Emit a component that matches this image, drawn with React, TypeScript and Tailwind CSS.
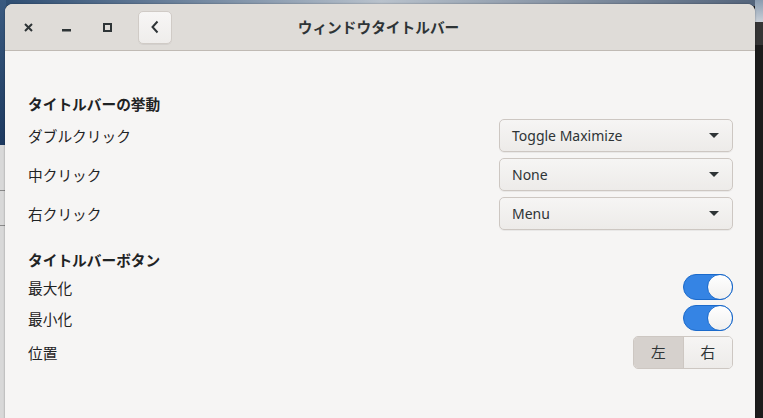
import React from "react";

const jp = { fontFamily: "'Noto Sans CJK JP', 'Noto Sans', sans-serif" };

function Combo({ value }: { value: string }) {
  return (
    <div className="w-[234px] h-[33px] flex items-center justify-between pl-[12px] pr-[13px] rounded-[5px] border border-[#cdc7c2] bg-gradient-to-b from-[#f6f5f4] to-[#edebe9] shadow-[0_1px_0_rgba(0,0,0,0.05)] text-[14px] text-[#2e3436]" style={{ fontFamily: "'Noto Sans', sans-serif" }}>
      <span>{value}</span>
      <svg width="10" height="6" viewBox="0 0 10 6"><path d="M0 0 L10 0 L5 5 Z" fill="#2e3436" /></svg>
    </div>
  );
}

function Switch() {
  return (
    <div className="relative w-[50px] h-[26px] rounded-full bg-[#3584e4] border border-[#1b6acb]">
      <div className="absolute right-[-1px] top-[-1px] w-[26px] h-[26px] rounded-full bg-gradient-to-b from-[#ffffff] to-[#f1f0ef] border border-[#1b6acb]" />
    </div>
  );
}

function Row({ label, children, h }: { label: string; children: React.ReactNode; h: string }) {
  return (
    <div className={`flex items-center justify-between ${h}`}>
      <span className="text-[14.7px] text-[#1f2324] pt-[2px]" style={jp}>{label}</span>
      {children}
    </div>
  );
}

export default function App() {
  return (
    <div className="relative w-[763px] h-[418px] overflow-hidden bg-[#1c1c1c]">
      {/* desktop background */}
      <div className="absolute left-0 top-0 w-[763px] h-[6px] bg-gradient-to-r from-[#2d4d72] via-[#b9c2cc] to-[#52637a]" />
      <div className="absolute left-0 top-0 w-[6px] h-[145px] bg-gradient-to-b from-[#3a5a80] to-[#1d3a60]" />
      <div className="absolute left-0 top-[145px] w-[6px] h-[273px] bg-[#d8d8d8]" />
      <div className="absolute left-0 top-[190px] w-[6px] h-[1px] bg-[#8a8a8a]" />
      <div className="absolute left-0 top-[225px] w-[6px] h-[1px] bg-[#8a8a8a]" />
      <div className="absolute right-0 top-0 w-[8px] h-[22px] bg-gradient-to-b from-[#8a9cb0] to-[#c9d0d8]" />
      <div className="absolute right-0 top-[22px] w-[8px] h-[23px] bg-[#353535]" />

      {/* window */}
      <div className="absolute left-[5px] top-[4px] w-[750px] h-[420px] flex flex-col rounded-t-[8px] overflow-hidden bg-[#f6f5f4] shadow-[0_0_2px_rgba(0,0,0,0.4)]">
        {/* header */}
        <div className="relative h-[47px] shrink-0 flex items-center bg-[#dfdcd8] border-b border-[#c0bab4]">
          <div className="flex items-center">
            <div className="w-[8px] ml-[19px]">
              <svg width="9" height="9" viewBox="0 0 9 9"><path d="M1 1 L8 8 M8 1 L1 8" stroke="#2e3436" strokeWidth="2" /></svg>
            </div>
            <div className="ml-[30px] mt-[6px]">
              <svg width="10" height="3" viewBox="0 0 10 3"><rect x="0" y="0" width="9" height="2.5" fill="#2e3436" /></svg>
            </div>
            <div className="ml-[31px]">
              <svg width="9" height="9" viewBox="0 0 9 9"><rect x="1" y="1" width="7" height="7" fill="none" stroke="#2e3436" strokeWidth="2" /></svg>
            </div>
            <div className="ml-[26px] w-[34px] h-[33px] flex items-center justify-center rounded-[5px] border border-[#d0cbc6] bg-gradient-to-b from-[#f7f6f5] to-[#efedeb] shadow-[0_1px_0_rgba(0,0,0,0.05)]">
              <svg width="10" height="14" viewBox="0 0 10 14"><path d="M7.5 1.5 L2.5 7 L7.5 12.5" fill="none" stroke="#2e3436" strokeWidth="2" /></svg>
            </div>
          </div>
          <div className="absolute left-0 right-0 top-0 h-[46px] flex items-center justify-center pointer-events-none">
            <span className="text-[14.7px] font-bold text-[#2e3436] mr-[3px]" style={jp}>ウィンドウタイトルバー</span>
          </div>
        </div>

        {/* content */}
        <div className="flex flex-col pl-[23px] pr-[22px] pt-[42px]">
          <div className="h-[20px] flex items-center mb-[6px] pt-[2px]">
            <span className="text-[14.7px] font-bold text-[#1f2324]" style={jp}>タイトルバーの挙動</span>
          </div>
          <div className="flex flex-col gap-[6px]">
            <Row label="ダブルクリック" h="h-[33px]"><Combo value="Toggle Maximize" /></Row>
            <Row label="中クリック" h="h-[33px]"><Combo value="None" /></Row>
            <Row label="右クリック" h="h-[33px]"><Combo value="Menu" /></Row>
          </div>
          <div className="h-[20px] flex items-center mt-[19px] mb-[5px] pt-[2px]">
            <span className="text-[14.7px] font-bold text-[#1f2324]" style={jp}>タイトルバーボタン</span>
          </div>
          <div className="flex flex-col gap-[5px]">
            <Row label="最大化" h="h-[26px]"><Switch /></Row>
            <Row label="最小化" h="h-[26px]"><Switch /></Row>
            <Row label="位置" h="h-[33px]">
              <div className="flex h-[33px] w-[100px] rounded-[5px] border border-[#cdc7c2] overflow-hidden text-[14.7px] text-[#2e3436]" style={jp}>
                <div className="flex-1 flex items-center justify-center bg-[#d6d1cd] border-r border-[#cdc7c2]">左</div>
                <div className="flex-1 flex items-center justify-center bg-gradient-to-b from-[#f6f5f4] to-[#edebe9]">右</div>
              </div>
            </Row>
          </div>
        </div>
      </div>
    </div>
  );
}
